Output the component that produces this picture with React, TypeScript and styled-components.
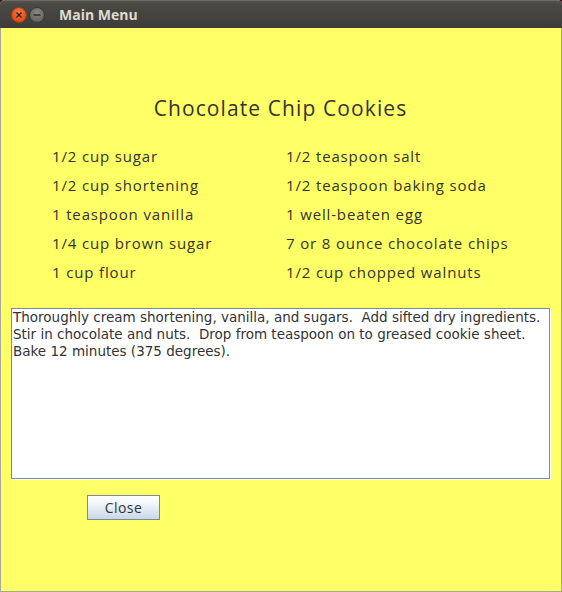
import React from 'react';
import styled, { createGlobalStyle } from 'styled-components';

const GlobalStyle = createGlobalStyle`
    html, body {
        margin: 0;
        padding: 0;
        background: #3b0f2e;
    }
`;

const Window = styled.div`
    width: 562px;
    height: 592px;
    display: flex;
    flex-direction: column;
    box-sizing: border-box;
    border-radius: 5px 5px 0 0;
    overflow: hidden;
    background: #ffff66;
`;

const TitleBar = styled.div`
    height: 28px;
    flex-shrink: 0;
    display: flex;
    align-items: center;
    padding: 0 0 0 11px;
    box-sizing: border-box;
    background: linear-gradient(#57554f 0px, #4a4944 3px, #3d3c38 28px);
    border-top: 1px solid #6a6863;
    gap: 2px;
`;

const WindowButton = styled.div<{ kind: 'close' | 'minimize' }>`
    width: 16px;
    height: 16px;
    border-radius: 50%;
    display: flex;
    align-items: center;
    justify-content: center;
    box-sizing: border-box;
    background: ${({ kind }) =>
        kind === 'close'
            ? 'radial-gradient(circle at 50% 35%, #f37c50, #e4531f 60%, #c5431a)'
            : 'radial-gradient(circle at 50% 35%, #8a8984, #6c6b67 60%, #5a5955)'};
    border: 1px solid ${({ kind }) => (kind === 'close' ? '#a93d17' : '#3a3a37')};
`;

const WindowTitle = styled.div`
    margin-left: 12px;
    font-family: 'Open Sans', 'DejaVu Sans', sans-serif;
    font-weight: 700;
    font-size: 14px;
    color: #dfdbd2;
    line-height: 1;
    padding-top: 1px;
`;

const Frame = styled.div`
    flex: 1;
    display: flex;
    flex-direction: column;
    border-left: 1px solid #a6a6a0;
    border-right: 1px solid #a6a6a0;
    border-bottom: 1px solid #a6a6a0;
    padding: 0 11px 0 10px;
    font-family: 'Open Sans', 'DejaVu Sans', sans-serif;
    color: #333333;
`;

const RecipeTitle = styled.h1`
    margin: 66px 0 0 0;
    text-align: center;
    font-size: 21px;
    font-weight: 400;
    letter-spacing: 1.1px;
    line-height: 28px;
    color: #333333;
`;

const Ingredients = styled.div`
    display: grid;
    grid-template-columns: 234px 1fr;
    grid-auto-rows: 29px;
    margin: 20px 0 0 41px;
`;

const Ingredient = styled.div`
    font-size: 15px;
    letter-spacing: 0.85px;
    line-height: 29px;
    white-space: nowrap;
`;

const TextArea = styled.div`
    margin-top: 21px;
    height: 171px;
    width: 539px;
    box-sizing: border-box;
    background: #ffffff;
    border: 1px solid #7a8a99;
    box-shadow: 1px 1px 0 #ffffff;
    padding: 0 1px;
    font-family: 'DejaVu Sans', sans-serif;
    font-size: 13.5px;
    line-height: 17px;
    color: #333333;
    white-space: pre-wrap;
`;

const ButtonRow = styled.div`
    display: flex;
    padding: 16px 0 0 76px;
`;

const Button = styled.button`
    width: 73px;
    height: 25px;
    box-sizing: border-box;
    border: 1px solid #7a8a99;
    border-radius: 0;
    background: linear-gradient(#ffffff 0%, #eef3f8 40%, #c8d7e6 100%);
    font-family: 'Open Sans', 'DejaVu Sans', sans-serif;
    font-size: 14px;
    letter-spacing: 0.4px;
    color: #333333;
    padding: 0;
    cursor: pointer;
`;

const left = ['1/2 cup sugar', '1/2 cup shortening', '1 teaspoon vanilla', '1/4 cup brown sugar', '1 cup flour'];
const right = [
    '1/2 teaspoon salt',
    '1/2 teaspoon baking soda',
    '1 well-beaten egg',
    '7 or 8 ounce chocolate chips',
    '1/2 cup chopped walnuts',
];

const directions =
    'Thoroughly cream shortening, vanilla, and sugars.  Add sifted dry ingredients.\n' +
    'Stir in chocolate and nuts.  Drop from teaspoon on to greased cookie sheet.\n' +
    'Bake 12 minutes (375 degrees).';

const App: React.FC = () => {
    return (
        <>
            <GlobalStyle />
            <Window>
                <TitleBar>
                    <WindowButton kind="close">
                        <svg width="8" height="8" viewBox="0 0 8 8">
                            <path d="M1.5 1.5 L6.5 6.5 M6.5 1.5 L1.5 6.5" stroke="#3a1a0c" strokeWidth="1.3" />
                        </svg>
                    </WindowButton>
                    <WindowButton kind="minimize">
                        <svg width="8" height="8" viewBox="0 0 8 8">
                            <path d="M0.5 4 L7.5 4" stroke="#2f2f2d" strokeWidth="1.3" />
                        </svg>
                    </WindowButton>
                    <WindowTitle>Main Menu</WindowTitle>
                </TitleBar>
                <Frame>
                    <RecipeTitle>Chocolate Chip Cookies</RecipeTitle>
                    <Ingredients>
                        {left.map((item, i) => (
                            <React.Fragment key={item}>
                                <Ingredient>{item}</Ingredient>
                                <Ingredient>{right[i]}</Ingredient>
                            </React.Fragment>
                        ))}
                    </Ingredients>
                    <TextArea>{directions}</TextArea>
                    <ButtonRow>
                        <Button>Close</Button>
                    </ButtonRow>
                </Frame>
            </Window>
        </>
    );
};

export default App;
